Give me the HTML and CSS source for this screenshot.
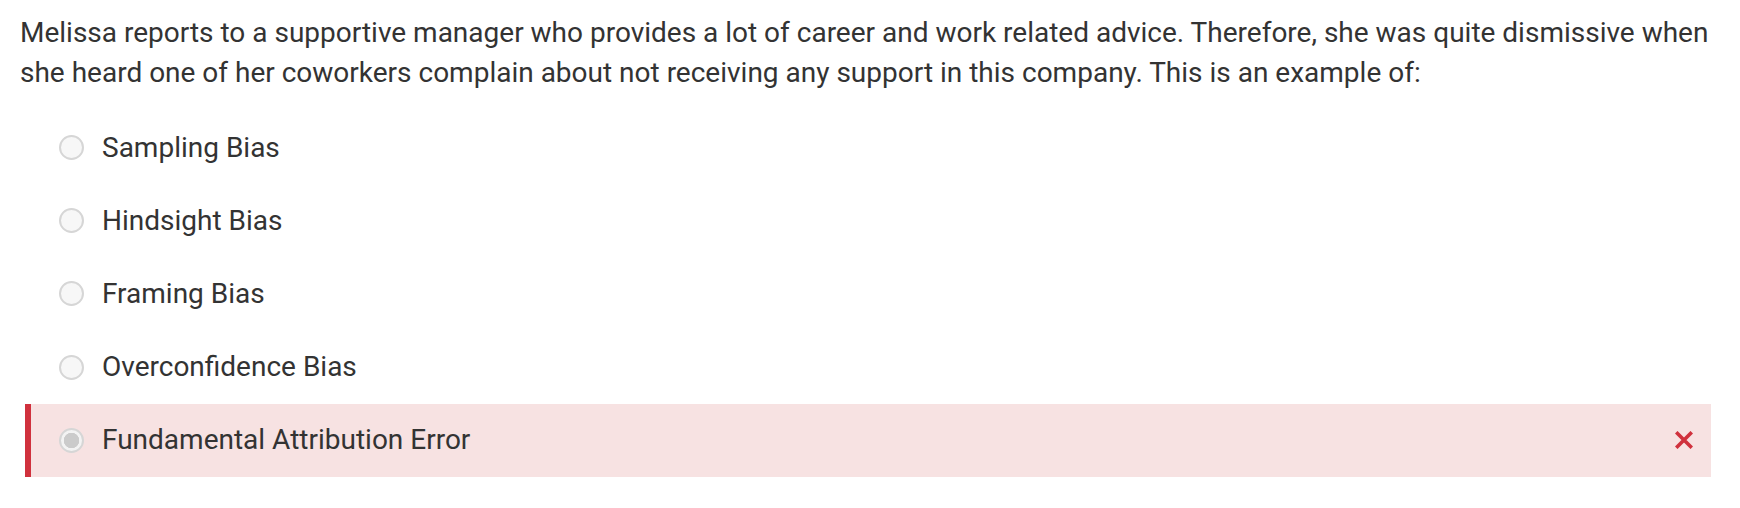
FILE: index.html
```html
<!DOCTYPE html>
<html lang="en">
<head>
<meta charset="utf-8">
<title>Quiz question</title>
<link rel="stylesheet" href="styles.css">
</head>
<body>
<main class="quiz">
  <p class="question">Melissa reports to a supportive manager who provides a lot of career and work related advice. Therefore, she was quite dismissive when she heard one of her coworkers complain about not receiving any support in this company. This is an example of:</p>
  <ul class="options">
    <li class="option"><span class="radio"></span><span class="label">Sampling Bias</span></li>
    <li class="option"><span class="radio"></span><span class="label">Hindsight Bias</span></li>
    <li class="option"><span class="radio"></span><span class="label">Framing Bias</span></li>
    <li class="option"><span class="radio"></span><span class="label">Overconfidence Bias</span></li>
    <li class="option option--wrong">
      <span class="radio radio--checked"></span>
      <span class="label">Fundamental Attribution Error</span>
      <svg class="mark" viewBox="0 0 18 18" aria-hidden="true"><path d="M2.5 2.5 L15.5 15.5 M15.5 2.5 L2.5 15.5" stroke="#d0313d" stroke-width="3.6" stroke-linecap="square" fill="none"/></svg>
    </li>
  </ul>
</main>
</body>
</html>
```

FILE: styles.css
```css
html, body {
  margin: 0;
  padding: 0;
  background: #ffffff;
}

.quiz {
  padding: 13px 20px 0 20px;
  font-family: Roboto, "Liberation Sans", sans-serif;
  font-size: 28px;
  line-height: 40px;
  color: #333333;
}

.question {
  margin: 0 0 18px 0;
}

.options {
  list-style: none;
  margin: 0 9px 0 5px;
  padding: 0;
}

.option {
  display: flex;
  align-items: center;
  padding: 16.6px 18px 16.6px 28px;
  border-left: 6px solid transparent;
}

.option--wrong {
  background: #f7e2e2;
  border-left-color: #d0313d;
}

.radio {
  flex: none;
  box-sizing: border-box;
  width: 25px;
  height: 25px;
  border-radius: 50%;
  border: 2px solid #d6d6d6;
  background: #f7f7f7;
  margin-right: 18px;
}

.radio--checked {
  background: radial-gradient(circle, #cbcbcb 0 7.5px, #f3f3f3 8px);
}

.label {
  flex: 1;
}

.mark {
  flex: none;
  width: 18px;
  height: 18px;
}
```
